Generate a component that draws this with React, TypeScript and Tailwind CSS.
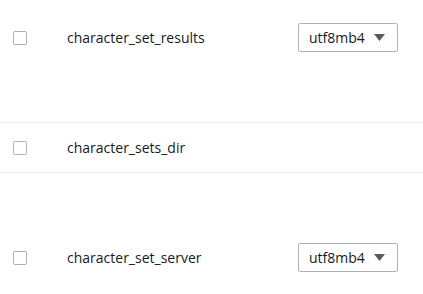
const font = { fontFamily: '"Open Sans", "Noto Sans", sans-serif' };

const Checkbox = () => (
    <span className="block w-[14px] h-[14px] rounded-[2px] border border-[#aab7b8] bg-white" />
);

const CharsetSelect = ({ value }: { value: string }) => (
    <div className="flex items-center justify-between w-[100px] h-[29px] pl-[10px] pr-[12px] rounded-[2px] border border-[#aab7b8] bg-white text-[14px] text-[#16191f]">
        <span>{value}</span>
        <svg width="11" height="7" viewBox="0 0 11 7">
            <polygon points="0,0 11,0 5.5,7" fill="#545b64" />
        </svg>
    </div>
);

const App = () => {
    return (
        <div className="w-[423px] h-[294px] overflow-hidden bg-white text-[#16191f]" style={font}>
            {/* fila 1 */}
            <div className="h-[123px] border-b border-[#eaeded] flex items-start pt-[23px]">
                <div className="flex items-center h-[29px] w-full">
                    <div className="w-[67px] pl-[13px]"><Checkbox /></div>
                    <div className="flex-1 text-[14px]">character_set_results</div>
                    <div className="pr-[25px]"><CharsetSelect value="utf8mb4" /></div>
                </div>
            </div>

            {/* fila 2 */}
            <div className="h-[50px] border-b border-[#eaeded] flex items-center">
                <div className="w-[67px] pl-[13px]"><Checkbox /></div>
                <div className="flex-1 text-[14px]">character_sets_dir</div>
            </div>

            {/* fila 3 */}
            <div className="flex items-start pt-[70px]">
                <div className="flex items-center h-[29px] w-full">
                    <div className="w-[67px] pl-[13px]"><Checkbox /></div>
                    <div className="flex-1 text-[14px]">character_set_server</div>
                    <div className="pr-[25px]"><CharsetSelect value="utf8mb4" /></div>
                </div>
            </div>
        </div>
    );
};

export default App;
